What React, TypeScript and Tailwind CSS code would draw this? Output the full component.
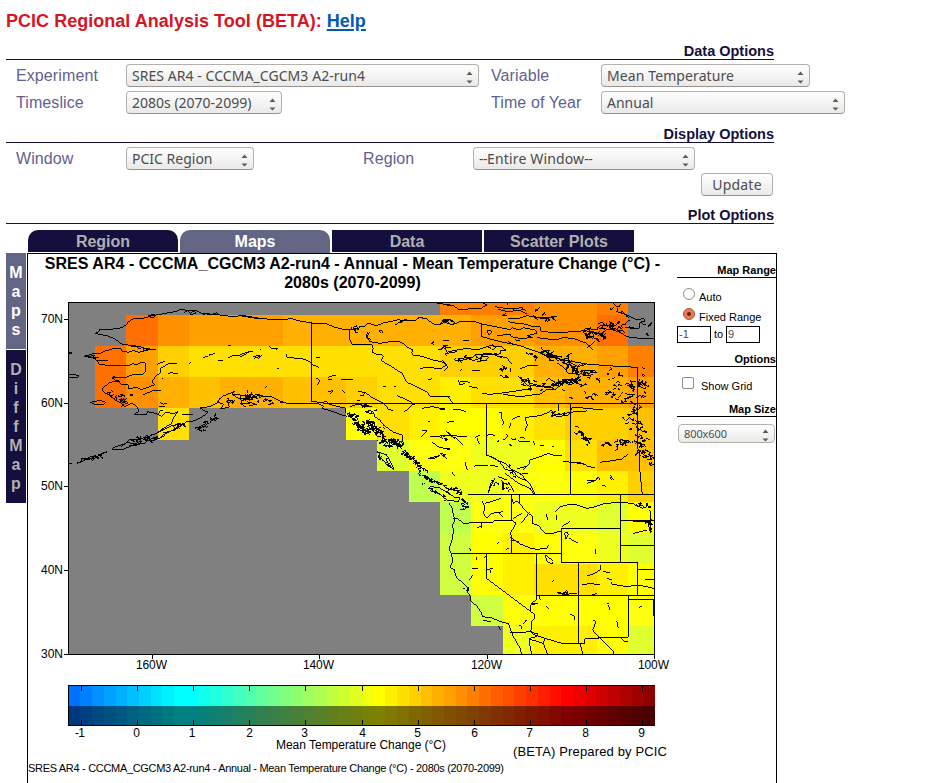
import type { ReactNode } from "react";

const ARIAL = "font-['Liberation_Sans',Arial,sans-serif]";
const UI = "font-['Noto_Sans','Open_Sans',sans-serif]";

/* ---------- temperature grid ---------- */

const COLS = [68, 95, 126, 158, 189, 220, 252, 283, 314, 346, 377, 409, 440, 471, 503, 534, 565, 597, 628, 655];
const ROWS = [302, 315, 346, 377, 408, 440, 471, 502, 533, 564, 595, 626, 655];
const CELLS = [
  "............bbbccb.",
  "..acdddeeeeeeddcca.",
  ".adghhhhhhhhgggeedb",
  ".acefeeffghhihhfeed",
  "...h.....jhijjihggf",
  "..........mkklljhff",
  "...........ollkkjig",
  "............okkllmj",
  "............njijklm",
  "............njihhij",
  ".............njjjjk",
  "..............liijm",
];
const PALETTE: Record<string, string> = {
  a: "#ff7000", b: "#ff8000", c: "#ff9000", d: "#ffa000", e: "#ffb000",
  f: "#ffc000", g: "#ffd000", h: "#ffe000", i: "#fff000", j: "#ffff00",
  k: "#ffff10", l: "#efff20", m: "#dfff30", n: "#cfff40", o: "#bfff50",
};

/* ---------- outlines, each group drawn at three units per pixel ---------- */

const OUTLINES: { x: number; y: number; d: string }[] = [
  {
    x: 60, y: 295,
    d: `M105 115L112 113L120 103L160 102L185 98L198 90L205 80L220 72L240 72L260 67L275 62L300 58L330 52L348 50L362 42L385 47L410 48L425 55L450 58L480 60L520 65L540 62L570 67L600 72
    M373 52l10-5l8 8l12-8l6 8l-20 4M430 60l10-6l15 5l15-6l6 8M265 62l18-4l0 8l-14 2
    M105 115L140 122L165 132L185 147L215 152L240 155L260 162L288 163M208 152l20 4l-4-6l14 12l10-6l4 12l14-8l8 6
    M72 184L100 176L120 176L135 168L165 160L182 160L185 168L205 172L220 166L235 172L265 165M80 186l24-6l-8 8l20 0M110 196l34 0M72 184L105 190L118 208L150 212L205 212L218 206L230 210L240 204L255 204L258 212L255 220L256 230L250 238L215 240L200 246L185 248L155 248L165 244
    M155 248L165 255L178 258L182 268L205 270L205 280L232 278L245 284L270 275L285 268L275 262L290 240L300 235L302 220L330 204L352 206M178 258L150 262L130 278L126 285L132 292L145 298L165 315L185 325L195 335L215 325L232 335L236 350L222 358L260 358L262 350L290 356L305 364L318 352L340 356L355 350L345 362L340 370L335 385L310 400L290 415L265 425L225 435L210 433L195 446L160 458L155 465L185 465L220 450L255 445L262 436L280 436L310 425L318 412L345 405L380 380L400 378L420 370L445 352L430 345L420 338L450 335L470 325L485 305L510 295L525 288L515 298L540 300L560 304L575 310L600 300
    M90 322L105 320L120 315L137 322L130 330L105 328Z M24 240L36 238L58 242L50 248L24 247M25 170l10 4l-8 3M25 505h12
    M50 505L62 500L65 490L85 490L92 484L110 485L125 475L142 470L120 480L105 490L80 492L66 500Z
    M290 415L312 404L335 392L372 386L350 398L330 410L312 418L300 428M210 302h8v-4h-8M182 455L200 443L225 446L246 438L232 450L206 452
    M250 300L275 288L302 287M292 208L305 202L315 200M325 236L338 232L340 237L354 237M388 205l6-5M428 188L445 184L450 178L466 176M475 196l14 0M505 188L525 180L545 184L565 172L578 168M580 185L600 180M295 356l5-8l8 0M300 322l10 6l12-4M298 335l16 0M365 358l34 0M410 405l12-4M505 151l8 0M305 248l2 3
    M480 310l-8 12l20 6l-12 14l28-6l-6-18M520 300l28 18l26-16M560 320l30 8l-24 4`,
  },
  {
    x: 240, y: 295,
    d: `M0 60L60 70L110 75L155 71L180 78L215 84L260 87L285 97L315 104L345 103L338 98L350 92L354 104L360 94L370 96L385 85L410 92L430 84L450 80L475 74L500 78L525 78L540 66L560 72L585 90L600 90L620 75M465 90L478 82L500 72L480 84M535 66l20 5M590 25L630 29
    M328 104V128L335 148H395L400 160L395 172L412 178L425 178L430 185L424 196L438 205L455 215L480 232L485 232L500 262L530 275L560 290L570 303L600 306L630 303
    M385 110L378 125L390 140L420 145L460 138L485 142L500 155L520 165L514 172L520 180L545 184L580 195L605 200L620 210L600 222L572 217L540 220M388 112L382 126L394 137M418 108l5-3l6 4l-5 6Z
    M88 152L92 160L112 160L110 164M0 180L20 172L38 168M42 190L65 182L55 190M138 178L142 187L190 192L210 200L215 208L238 217M228 187h12M265 247L275 243L288 240M302 253H338M265 254h10M60 162l4 2M112 222l4 0
    M214 84V320L245 322L262 320L268 328L318 340L318 355M250 325H600M120 322L145 325L235 326L250 334L245 340L280 350L305 360L322 364
    M0 310L25 312L45 300L60 300L75 305L95 305L120 318L140 325M0 326L30 325M75 280l6-6M228 248L240 256L232 270M265 290l14-4l-8 12M305 285l8 8
    M355 290L375 292L400 310L430 325L445 342L460 348M375 290l-6 12l-8 0M470 302L490 310L515 322M430 275h8M462 275h5M565 255l10-4M492 350L505 342L515 330L525 330M545 340L575 335L615 342M565 379h5
    M385 345L400 350L405 366L420 375L430 390L445 400L460 412L487 420L490 450L470 458M410 470L440 480L448 495L462 523L440 510L430 495L415 485L420 475Z
    M545 405L560 408L545 425M575 440L585 448L600 458L630 462M565 490L600 482L580 492Z M570 424H600M600 475l18 4l-10 6M330 335l25-8l25 8l16 0`,
  },
  {
    x: 440, y: 295,
    d: `M0 90L10 75L25 72L20 84L35 88L50 84L60 80L100 78L125 87L150 92L180 98L212 104L215 98L240 105L250 98L285 105L292 114L262 122L280 128L240 130L215 125L210 118L170 122M125 87V125L180 140L240 152L290 170L330 186L400 200L440 207L500 212L592 217V330M142 108l10-3l2 8l-8 8Z
    M205 72L230 72L260 62L300 68L350 65L300 72M205 80L225 84L245 85L280 95L300 95L302 108L330 112L370 112L425 108L440 100L470 105L480 92L530 90M290 128L350 135L370 128L400 130L440 145L460 165M20 30L40 32L60 45L85 42L120 42L140 30L130 25
    M165 35L185 38L200 42L250 38M175 42L200 50L240 46L260 56M520 25L535 38L530 50L560 60L590 75L610 70L615 78L600 84L598 100L555 98M470 98L520 105L540 112L560 125L600 130L644 130
    M0 165L15 152L20 172L50 165L80 160L110 165L150 152L185 155L198 166L180 165L182 175L170 180L130 180M60 198L95 188L110 178L150 176L168 180M15 176L50 170M55 190L90 188L100 198L130 184L145 186L140 195L110 200M5 195L20 208L22 220L12 226M60 228l5-7M180 240l12 8l12-5M165 182L200 188L215 208M210 220l2 12M240 222L265 212L295 210M95 228h25M10 138h16M70 138h18M205 140l14 6M225 134l14 4
    M300 172L330 165L320 180M320 188L345 182L350 196L385 190L385 200L415 215L438 208M350 204L370 215L385 235L420 238L430 228L460 225M235 245L250 256L265 250L270 265L310 275L330 275L345 284M330 275L360 260L385 258L415 253M360 265L375 262L390 270L405 262M440 160l24-20M430 110l12 20l20-8`,
  },
  {
    x: 440, y: 375,
    d: `M55 15L60 30L75 25M60 18L90 22M86 34L115 40M125 55L150 58L180 55L215 50L245 45L275 40L260 28L250 20L240 10L265 18L270 30L300 35L335 38L360 20L380 12L415 15M190 58L240 65L275 60L300 58L320 44L345 44L370 24L410 20M0 63L25 65L38 85
    M139 85V240L165 250L180 262L195 282L222 290L232 305L260 318L272 330L287 360M148 244L170 255L195 265L210 280L240 295L264 320M391 85V360M0 85H644M592 70V220L598 230L600 290L607 360M85 360H644
    M0 103h15M38 104L60 104L78 110M20 142L42 139M178 112L185 112L183 130L192 140L188 150M215 135L230 126L240 125M212 145L208 160M255 130L262 150L255 168M255 128L275 125L300 122L320 114L335 106L345 120L360 118L390 112L398 96L440 100L490 105M335 110L350 124L380 122L400 110L440 108M355 85V108
    M0 182L20 182L82 184M18 168L34 184L50 190L70 210M24 172L44 192M105 188L120 180M110 188L118 206M139 182L150 178L165 182M190 195L205 183M240 186L255 190M235 198L270 200M300 212L312 212M335 212l8 4M0 218L15 220L30 225M0 235L20 250M75 262L82 285M102 274L120 270L145 272
    M230 282L260 274L268 265L270 255L300 245L325 235L340 241L365 242M250 286L258 275M370 260L405 262L430 265L445 275L465 278M480 262L510 258L545 252L565 238M400 262L435 268M440 318L465 318L475 305L480 315M510 300l10 14M485 330l12 4M145 350L160 320L165 310M190 320L188 345M205 320L222 350M35 290l8 12M150 270L175 275M240 298L265 294`,
  },
  {
    x: 430, y: 470,
    d: `M0 50L25 52L40 60L55 70L75 82L90 84L85 95L50 90L30 72L0 62M55 98L65 110L70 135L75 150L68 165L70 185L65 215L57 235L65 255L68 275L60 292L72 298L80 325L95 335L112 352L118 360L112 365L122 380L122 392L140 408L155 430L157 440L185 444L200 450L222 458L235 460L240 475L250 500L262 520L270 535L275 552
    M240 487H280L305 484M70 145L85 147L100 160L135 158L190 157L192 152L245 151M245 76V151L258 160L250 175L240 190L245 200V250M65 250H394M169 250V325L305 427L312 432L315 445L305 455L305 470L302 487L310 493L345 505L395 520H465V507H505V502H595V388M319 250V376H672M319 376L318 390L303 402L325 400L303 405V427
    M445 277V520M394 175V277H622V376M394 175H571M571 76V277M571 151H672M571 226H672M622 300H672M645 330H672M595 376V388H670V437M268 76V100L290 125L308 140L306 160L325 166L345 190L370 190L385 184L394 185M245 85L250 100L262 92L268 100M375 125L388 112L410 105L440 105L470 115L490 112L520 102L550 98L575 98L610 100L620 108L640 115M380 135L380 150M395 170L420 155M350 133L352 150
    M155 92L165 110L160 130L170 145L185 130L220 125M165 100L185 95L212 85M205 128l14 14M140 175L155 168M155 158v16M250 145L275 130M275 158L300 125
    M245 205L270 222L300 234L320 238L350 235L355 226M242 200L246 212L268 214M200 222l8-8M228 240l8-6M118 235l6 8
    M345 258L352 258L370 275L365 282L352 274Z M403 190L412 186L415 195L408 206Z M418 205L445 220M495 240L498 240L498 252M365 335l8-6M545 335L545 342L590 350L625 345L672 355M455 345L480 340L510 345M472 318L490 312L510 300L512 285M520 305L540 308M530 325L545 330
    M385 372L405 368L410 360M395 374L440 370M325 375L332 390M350 408l5 8M420 432L432 438L435 450M535 405L540 420M530 402l8-3M560 452l5 22M628 412l8-3M500 370l-20 8
    M305 487L325 492L318 500L300 505L298 520L305 552M300 508L340 520L345 505M340 520L352 552M490 450L498 455L488 480L510 505L552 545V552M450 520L458 552M575 505l8 10L595 516M160 452L182 454M205 468l6 12M268 465l8 5l-3 6M280 462l10-10l-6 0
    M608 155L660 155L655 165L662 190L660 120M625 100L645 112M610 190L650 180M470 40L490 34L505 25M515 45l14 4M540 22l4 8M176 68L182 40L190 35M215 30L222 60M225 10L265 40L300 55L315 76M205 20L230 30M140 260v10M160 265l6-6M170 300l18-6M182 310l0-10M125 295l20 0M118 330l10-14`,
  },
];

/* ---------- small islands and lakes ---------- */

type Cluster = [x1: number, y1: number, x2: number, y2: number, spread: number, count: number, size: number];

const CLUSTERS: Cluster[] = [
  [348, 412, 368, 434, 4, 44, 5],
  [366, 422, 388, 440, 6, 50, 5],
  [380, 443, 402, 442, 5, 36, 5],
  [402, 450, 424, 470, 3, 38, 4],
  [421, 475, 462, 494, 1.5, 40, 4],
  [420, 482, 448, 499, 1, 12, 4],
  [379, 455, 391, 466, 2, 12, 4],
  [463, 500, 465, 510, 2.5, 18, 4],
  [197, 430, 216, 418, 4, 20, 6],
  [108, 390, 124, 402, 5, 22, 5],
  [132, 441, 150, 438, 3, 10, 5],
  [146, 440, 186, 422, 3, 18, 5],
  [85, 460, 105, 453, 1.5, 8, 5],
  [222, 402, 258, 396, 3, 12, 7],
  [248, 394, 270, 402, 3, 10, 5],
  [360, 402, 374, 412, 4, 10, 5],
  [351, 328, 360, 331, 2, 5, 4],
  [432, 344, 448, 350, 4, 5, 5],
  [440, 322, 452, 320, 2, 7, 4],
  [530, 354, 555, 356, 4, 12, 7],
  [555, 358, 592, 375, 7, 34, 6],
  [552, 384, 578, 380, 2, 18, 8],
  [490, 350, 510, 375, 6, 10, 6],
  [455, 360, 480, 358, 4, 7, 8],
  [500, 310, 560, 318, 8, 10, 9],
  [585, 332, 605, 338, 5, 18, 8],
  [600, 325, 625, 328, 4, 12, 9],
  [610, 310, 648, 330, 9, 10, 7],
  [600, 377, 640, 385, 10, 22, 5],
  [628, 400, 650, 376, 10, 20, 5],
  [605, 390, 625, 398, 8, 18, 5],
  [628, 405, 640, 440, 9, 30, 5],
  [638, 440, 652, 466, 7, 34, 5],
  [602, 443, 634, 443, 3, 20, 6],
  [578, 430, 588, 443, 4, 16, 5],
  [565, 390, 600, 395, 8, 9, 5],
  [518, 378, 548, 392, 5, 8, 6],
  [548, 415, 568, 413, 2, 7, 5],
  [504, 466, 516, 474, 4, 8, 4],
  [490, 482, 515, 488, 6, 9, 5],
  [500, 440, 540, 442, 6, 5, 5],
  [441, 436, 448, 440, 2, 4, 5],
  [561, 594, 568, 592, 1.5, 6, 4],
  [634, 503, 650, 506, 1.5, 8, 4],
  [648, 520, 651, 530, 2, 8, 4],
  [465, 588, 468, 590, 1.5, 4, 3],
];

function scatter(): string {
  let state = 20802099;
  const rnd = () => {
    state = (state * 1664525 + 1013904223) >>> 0;
    return state / 4294967296;
  };
  let d = "";
  for (const [x1, y1, x2, y2, spread, count, size] of CLUSTERS) {
    for (let n = 0; n < count; n++) {
      const t = rnd();
      const x = x1 + (x2 - x1) * t + (rnd() + rnd() - 1) * spread;
      const y = y1 + (y2 - y1) * t + (rnd() + rnd() - 1) * spread;
      d += `M${x.toFixed(1)} ${y.toFixed(1)}`;
      const turns = 2 + Math.floor(rnd() * 3);
      for (let k = 0; k < turns; k++) {
        d += `l${((rnd() - 0.45) * size).toFixed(1)} ${((rnd() - 0.45) * size * 0.7).toFixed(1)}`;
      }
    }
  }
  return d;
}
const ISLETS = scatter();

/* ---------- colour bar ---------- */

function barColour(i: number, shade: number): string {
  let c: number[];
  if (i <= 10) c = [0, 112 + i * 16, 255];
  else if (i <= 26) c = [(i - 10) * 16, 255, 255 - (i - 10) * 16];
  else if (i <= 42) c = [255, 255 - (i - 26) * 16, 0];
  else c = [255 - (i - 42) * 16, 0, 0];
  return `rgb(${c.map((v) => Math.round(Math.max(0, Math.min(255, v)) * shade)).join(",")})`;
}
const BAR = Array.from({ length: 50 }, (_, i) => i);
const barX = (i: number) => Math.round(68.6 + i * 11.73);
const BAR_LABELS = [136.5, 192, 249.5, 304.5, 362.5, 417.5, 474.5, 529.5, 585.5, 641.5];

function Label({ x, y, w, size = 12, children }: { x: number; y: number; w: number; size?: number; children: string }) {
  return (
    <text x={x} y={y} textLength={w} fontSize={size} lengthAdjust="spacing">
      {children}
    </text>
  );
}

function Chart() {
  return (
    <svg
      className={`block shrink-0 ${ARIAL}`}
      width={648}
      height={483}
      viewBox="28 300 648 483"
      fill="#000"
    >
      <defs>
        <clipPath id="frame">
          <rect x={68} y={302} width={587} height={353} />
        </clipPath>
      </defs>
      <g shapeRendering="crispEdges">
        <rect x={68} y={302} width={587} height={353} fill="#808080" />
        {CELLS.flatMap((row, r) =>
          row.split("").map((c, k) =>
            c === "." ? null : (
              <rect
                key={`${r}-${k}`}
                x={COLS[k]}
                y={ROWS[r]}
                width={COLS[k + 1] - COLS[k]}
                height={ROWS[r + 1] - ROWS[r]}
                fill={PALETTE[c]}
              />
            ),
          ),
        )}
        <g clipPath="url(#frame)" fill="none" stroke="#000">
          {OUTLINES.map((o, i) => (
            <path key={i} transform={`translate(${o.x} ${o.y}) scale(0.33333)`} strokeWidth={3} d={o.d} />
          ))}
          <path d={ISLETS} strokeWidth={1} />
        </g>
        <path
          fill="none"
          stroke="#000"
          d="M68.5 302.5H654.5V654.5H68.5ZM64 319.5h4M64 403.5h4M64 486.5h4M64 570.5h4M64 654.5h4M152.5 655v4M319.5 655v4M487.5 655v4M654.5 655v4"
        />
        {BAR.map((i) => (
          <g key={i}>
            <rect x={barX(i)} y={685} width={barX(i + 1) - barX(i)} height={21} fill={barColour(i, 1)} />
            <rect x={barX(i)} y={706} width={barX(i + 1) - barX(i)} height={20} fill={barColour(i, 0.5)} />
          </g>
        ))}
        <path fill="none" stroke="#000" d="M655 685.5H68.5V725.5H655" />
        {[81, 137, 193, 249, 305, 362, 418, 474, 530, 586, 642].map((x) => (
          <path key={x} stroke="#000" d={`M${x + 0.5} 686v5M${x + 0.5} 720v5`} />
        ))}
      </g>
      <Label x={41} y={323} w={22}>70N</Label>
      <Label x={41} y={407} w={22}>60N</Label>
      <Label x={41} y={490} w={22}>50N</Label>
      <Label x={41} y={574} w={22}>40N</Label>
      <Label x={41} y={658} w={22}>30N</Label>
      <Label x={136} y={669} w={31}>160W</Label>
      <Label x={303} y={669} w={31}>140W</Label>
      <Label x={471} y={669} w={31}>120W</Label>
      <Label x={638} y={669} w={31}>100W</Label>
      <Label x={75} y={737} w={10}>-1</Label>
      {BAR_LABELS.map((x, i) => (
        <text key={x} x={x} y={737} fontSize={12} textAnchor="middle">
          {i}
        </text>
      ))}
      <Label x={276} y={749} w={170}>Mean Temperature Change (°C)</Label>
      <Label x={513} y={756} w={154} size={13}>(BETA) Prepared by PCIC</Label>
      <Label x={28} y={772} w={476} size={11}>
        SRES AR4 - CCCMA_CGCM3 A2-run4 - Annual - Mean Temperature Change (°C) - 2080s (2070-2099)
      </Label>
    </svg>
  );
}

/* ---------- form widgets ---------- */

function Arrows() {
  return (
    <svg width={7} height={13} viewBox="0 0 7 13" className="mt-1 shrink-0 fill-[#5c5c5c]">
      <path d="M3.5 0.5L6.5 4H0.5ZM0.5 9.5H6.5L3.5 12.5Z" />
    </svg>
  );
}

function Select({ width, spacing, children }: { width: string; spacing: string; children: ReactNode }) {
  return (
    <div
      className={`flex h-[23px] items-center justify-between rounded border border-[#b4b1ad] border-b-[#989590] bg-linear-to-b from-white to-[#eae9e8] pr-[5px] pl-[5px] ${UI} text-[14px] text-[#4c4c4c] ${width}`}
    >
      <span className={`leading-none whitespace-nowrap ${spacing}`}>{children}</span>
      <Arrows />
    </div>
  );
}

function Heading({ className, children }: { className: string; children: string }) {
  return (
    <h2 className={`w-[768px] border-b border-[#140f3c] text-right text-[14.5px] leading-[15px] font-bold text-[#140f3c] ${className}`}>
      {children}
    </h2>
  );
}

function FieldLabel({ width, children }: { width: string; children: string }) {
  return <div className={`shrink-0 text-[16px] leading-[23px] tracking-[0.1px] text-[#625f8f] ${width}`}>{children}</div>;
}

function Tab({ className, children }: { className: string; children: string }) {
  return <div className={`w-[150px] text-center text-[16px] leading-[23px] font-bold ${className}`}>{children}</div>;
}

function SideTab({ label, className }: { label: string; className: string }) {
  return (
    <div className={`flex w-5 flex-col items-center py-2.5 text-[16px] leading-[19px] font-bold ${className}`}>
      {label.split("").map((c, i) => (
        <span key={i}>{c}</span>
      ))}
    </div>
  );
}

function SideHeading({ className, children }: { className: string; children: ReactNode }) {
  return <h3 className={`border-b border-black text-right text-[11px] leading-[14px] font-bold ${className}`}>{children}</h3>;
}

function MapControls() {
  return (
    <div className="w-[99px] shrink-0 text-[11px] text-black">
      <SideHeading className="mt-[9px]">Map Range</SideHeading>
      <div className="mt-[10px] flex h-[18px] items-start pl-[6px]">
        <span className="size-3 rounded-full border border-[#908d8a] bg-white" />
        <span className="mt-[3px] ml-1 leading-[13px]">Auto</span>
      </div>
      <div className="mt-[2px] flex h-[18px] items-start pl-[6px]">
        <span className="flex size-3 items-center justify-center rounded-full border border-[#a8553a] bg-[#f0784f]">
          <span className="size-1 rounded-full bg-[#4a2a20]" />
        </span>
        <span className="mt-[3px] ml-1 leading-[13px]">Fixed Range</span>
      </div>
      <div className="flex h-[17px] items-center">
        <span className="h-[17px] w-[34px] border border-black pl-px leading-[15px] text-[#4c4c4c]">-1</span>
        <span className="w-[15px] text-center">to</span>
        <span className="h-[17px] w-[34px] border border-black pl-px leading-[15px] text-[#4c4c4c]">9</span>
      </div>
      <SideHeading className="mt-[9px]">Options</SideHeading>
      <div className="mt-[10px] flex h-[18px] items-start pl-[5px]">
        <span className="size-3 rounded-[2px] border border-[#908d8a] bg-white" />
        <span className="mt-[3px] ml-[7px] leading-[13px]">Show Grid</span>
      </div>
      <SideHeading className="mt-[7px]">Map Size</SideHeading>
      <div
        className={`mt-[7px] ml-px flex h-[19px] w-[97px] items-center justify-between rounded border border-[#b4b1ad] bg-linear-to-b from-white to-[#eae9e8] pr-[5px] pl-[5px] ${UI} text-[11px] text-[#4c4c4c]`}
      >
        <span className="leading-none tracking-[-0.1px]">800x600</span>
        <Arrows />
      </div>
    </div>
  );
}

export default function App() {
  return (
    <main className={`h-[783px] w-[937px] overflow-hidden bg-white pl-[6px] ${ARIAL}`}>
      <h1 className="pt-[10px] text-[18px] leading-[22px] font-bold tracking-[0.03px] text-[#d7141f]">
        PCIC Regional Analysis Tool (BETA):{" "}
        <a className="text-[#005bb5] underline decoration-2 underline-offset-2">Help</a>
      </h1>

      <Heading className="mt-[12px]">Data Options</Heading>
      <div className="mt-1 flex pl-[10px]">
        <FieldLabel width="w-[110px]">Experiment</FieldLabel>
        <div className="w-[365px]">
          <Select width="w-[353px]" spacing="tracking-[0.06px]">SRES AR4 - CCCMA_CGCM3 A2-run4</Select>
        </div>
        <FieldLabel width="w-[110px]">Variable</FieldLabel>
        <Select width="w-[209px]" spacing="tracking-[0.1px]">Mean Temperature</Select>
      </div>
      <div className="mt-1 flex pl-[10px]">
        <FieldLabel width="w-[110px]">Timeslice</FieldLabel>
        <div className="w-[365px]">
          <Select width="w-[156px]" spacing="tracking-[0px]">2080s (2070-2099)</Select>
        </div>
        <FieldLabel width="w-[110px]">Time of Year</FieldLabel>
        <Select width="w-[244px]" spacing="tracking-[0px]">Annual</Select>
      </div>

      <Heading className="mt-[13px]">Display Options</Heading>
      <div className="mt-1 flex pl-[10px]">
        <FieldLabel width="w-[110px]">Window</FieldLabel>
        <div className="w-[237px]">
          <Select width="w-[128px]" spacing="tracking-[0px]">PCIC Region</Select>
        </div>
        <FieldLabel width="w-[110px]">Region</FieldLabel>
        <Select width="w-[222px]" spacing="tracking-[0.15px]">
          <span className="tracking-[-0.5px]">--</span>Entire Window<span className="tracking-[-0.5px]">--</span>
        </Select>
      </div>
      <div className="mt-[3px] flex w-[767px] justify-end">
        <button
          className={`h-[23px] w-[72px] rounded border border-[#b4b1ad] border-b-[#989590] bg-linear-to-b from-white to-[#eae9e8] ${UI} text-[14px] leading-none tracking-[0.2px] text-[#4c4c4c]`}
        >
          Update
        </button>
      </div>

      <Heading className="mt-[12px]">Plot Options</Heading>
      <div className="mt-[6px] flex h-[23px] items-start gap-[2px] pl-[22px]">
        <Tab className="h-[22px] rounded-t-[10px] bg-[#140f3c] text-[#b0b0b0]">Region</Tab>
        <Tab className="h-[23px] rounded-t-[10px] bg-[#636585] text-white">Maps</Tab>
        <Tab className="h-[22px] bg-[#140f3c] text-[#b0b0b0]">Data</Tab>
        <Tab className="h-[22px] bg-[#140f3c] text-[#b0b0b0]">Scatter Plots</Tab>
      </div>

      <div className="flex items-start gap-px">
        <div className="flex flex-col gap-px">
          <SideTab label="Maps" className="bg-[#636585] text-white" />
          <SideTab label="DiffMap" className="bg-[#140f3c] text-[#b0b0b0]" />
        </div>
        <div className="flex h-[560px] w-[750px] border border-black">
          <div className="flex w-[649px] shrink-0 flex-col">
            <div className="h-[46px] text-center text-[16px] leading-[19px] font-bold tracking-[0.03px] whitespace-nowrap text-black">
              <div>SRES AR4 - CCCMA_CGCM3 A2-run4 - Annual - Mean Temperature Change (°C) -</div>
              <div>2080s (2070-2099)</div>
            </div>
            <Chart />
          </div>
          <MapControls />
        </div>
      </div>
    </main>
  );
}
